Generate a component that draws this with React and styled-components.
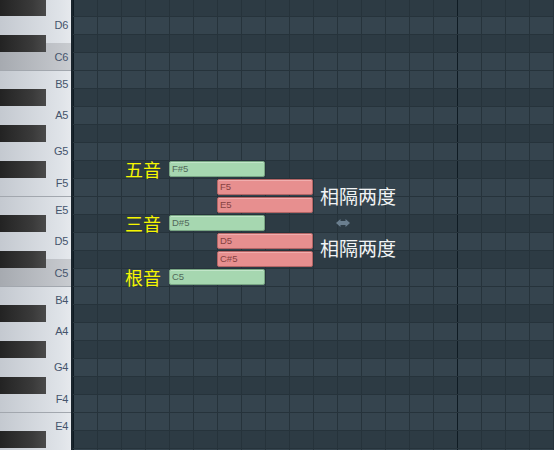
// App.jsx
import React from 'react'
import styled, { createGlobalStyle, css } from 'styled-components'

const GlobalStyle = createGlobalStyle`
  html, body {
    margin: 0;
    padding: 0;
    background: #2e3c45;
  }
`

const ROW = 18
const COL = 24
const TOP = -2 // first row (D#6) starts above the window

const PITCHES = [
  'D#6', 'D6', 'C#6', 'C6', 'B5', 'A#5', 'A5', 'G#5', 'G5', 'F#5', 'F5', 'E5',
  'D#5', 'D5', 'C#5', 'C5', 'B4', 'A#4', 'A4', 'G#4', 'G4', 'F#4', 'F4', 'E4',
  'D#4', 'D4'
]

const rowTop = (name) => TOP + PITCHES.indexOf(name) * ROW

// white keys, top to bottom, with their heights in px
// (the first and last keys are only partly in view, their names are off screen)
const WHITE_KEYS = [
  { name: 'E6', h: 27, hidden: true },
  { name: 'D6', h: 36 },
  { name: 'C6', h: 27, hl: true },
  { name: 'B5', h: 27, sep: true },
  { name: 'A5', h: 36 },
  { name: 'G5', h: 36 },
  { name: 'F5', h: 27 },
  { name: 'E5', h: 27, sep: true },
  { name: 'D5', h: 36 },
  { name: 'C5', h: 27, hl: true },
  { name: 'B4', h: 27, sep: true },
  { name: 'A4', h: 36 },
  { name: 'G4', h: 36 },
  { name: 'F4', h: 27 },
  { name: 'E4', h: 27, sep: true },
  { name: 'D4', h: 36, hidden: true }
]

const NOTES = [
  { pitch: 'F#5', col: 4, len: 4, kind: 'green' },
  { pitch: 'F5', col: 6, len: 4, kind: 'red' },
  { pitch: 'E5', col: 6, len: 4, kind: 'red' },
  { pitch: 'D#5', col: 4, len: 4, kind: 'green' },
  { pitch: 'D5', col: 6, len: 4, kind: 'red' },
  { pitch: 'C#5', col: 6, len: 4, kind: 'red' },
  { pitch: 'C5', col: 4, len: 4, kind: 'green' }
]

const Frame = styled.div`
  display: flex;
  width: 554px;
  height: 450px;
  overflow: hidden;
  font-family: "Liberation Sans", Arial, sans-serif;
`

/* ---------- keyboard ---------- */

const Keyboard = styled.div`
  position: relative;
  flex: 0 0 71px;
  overflow: hidden;
  border-right: 2px solid #1a252d;
`

const WhiteKeys = styled.div`
  display: flex;
  flex-direction: column;
  margin-top: -20px;
`

const WhiteKey = styled.div`
  box-sizing: border-box;
  flex: 0 0 ${p => p.$h}px;
  display: flex;
  align-items: center;
  justify-content: flex-end;
  padding-right: 3px;
  background: linear-gradient(to right, #c4c9d0, #dfe3e8 85%, #e6e9ed);
  font-size: 11px;
  letter-spacing: -0.3px;
  color: #45546c;

  ${p => p.$hl && css`
    background: linear-gradient(to right, #a6aab0, #c3c6cb 85%, #c9ccd0);
  `}

  ${p => p.$sep && css`
    border-top: 1px solid #a2a7ae;
  `}
`

const BlackKey = styled.div`
  position: absolute;
  left: 0;
  width: 46px;
  height: 17px;
  background: linear-gradient(to right, #232323, #3a3a3a 70%, #4a4a4a);
`

/* ---------- piano roll ---------- */

const Roll = styled.div`
  position: relative;
  flex: 1;
  overflow: hidden;
`

const Rows = styled.div`
  display: flex;
  flex-direction: column;
  margin-top: ${TOP}px;
`

const Row = styled.div`
  box-sizing: border-box;
  flex: 0 0 ${ROW}px;
  border-top: 1px solid #26333b;
  background-color: ${p => (p.$dark ? '#2d3b44' : '#35444e')};
  background-image:
    repeating-linear-gradient(to right, #0f1b23 0 1px, transparent 1px ${COL * 16}px),
    repeating-linear-gradient(to right, #26333b 0 1px, transparent 1px ${COL}px);
`

const Note = styled.div`
  position: absolute;
  box-sizing: border-box;
  height: 16px;
  padding-left: 2px;
  border-radius: 2px;
  font-size: 9.5px;
  line-height: 14px;
  ${p => p.$kind === 'green' ? css`
    background: #a6d7b0;
    border: 1px solid #78a583;
    color: #52695a;
    box-shadow: inset 0 1px 0 #c2e6c9;
  ` : css`
    background: #e78f8f;
    border: 1px solid #b36565;
    color: #864242;
    box-shadow: inset 0 1px 0 #f1aeae;
  `}
`

const ChordLabel = styled.div`
  position: absolute;
  left: 52px;
  font-family: "Noto Sans CJK SC", "Noto Sans", sans-serif;
  font-size: 18px;
  line-height: 18px;
  color: #f6f600;
  white-space: nowrap;
`

const GapLabel = styled.div`
  position: absolute;
  left: 247px;
  font-family: "Noto Sans CJK SC", "Noto Sans", sans-serif;
  font-size: 19px;
  line-height: 19px;
  color: #f2f4f5;
  white-space: nowrap;
`

const ArrowIcon = styled.svg`
  position: absolute;
  left: 263px;
  top: 219px;
  width: 14px;
  height: 8px;
`

export default function App() {
  const blackKeys = PITCHES.filter(p => p.includes('#'))

  return (
    <Frame>
      <GlobalStyle />
      <Keyboard>
        <WhiteKeys>
          {WHITE_KEYS.map(k => (
            <WhiteKey key={k.name} $h={k.h} $hl={k.hl} $sep={k.sep}>
              {k.hidden ? null : k.name}
            </WhiteKey>
          ))}
        </WhiteKeys>
        {blackKeys.map(p => (
          <BlackKey key={p} style={{ top: rowTop(p) + 1 }} />
        ))}
      </Keyboard>

      <Roll>
        <Rows>
          {PITCHES.map(p => (
            <Row key={p} $dark={p.includes('#')} />
          ))}
        </Rows>

        {NOTES.map(n => (
          <Note
            key={n.pitch}
            $kind={n.kind}
            style={{ top: rowTop(n.pitch) + 1, left: n.col * COL, width: n.len * COL }}
          >
            {n.pitch}
          </Note>
        ))}

        <ChordLabel style={{ top: rowTop('F#5') }}>五音</ChordLabel>
        <ChordLabel style={{ top: rowTop('D#5') }}>三音</ChordLabel>
        <ChordLabel style={{ top: rowTop('C5') }}>根音</ChordLabel>

        <GapLabel style={{ top: 186 }}>相隔两度</GapLabel>
        <GapLabel style={{ top: 238 }}>相隔两度</GapLabel>

        <ArrowIcon viewBox="0 0 14 8">
          <polygon
            points="0,4 4.5,0 4.5,2 9.5,2 9.5,0 14,4 9.5,8 9.5,6 4.5,6 4.5,8"
            fill="#6a7e8e"
          />
        </ArrowIcon>
      </Roll>
    </Frame>
  )
}
